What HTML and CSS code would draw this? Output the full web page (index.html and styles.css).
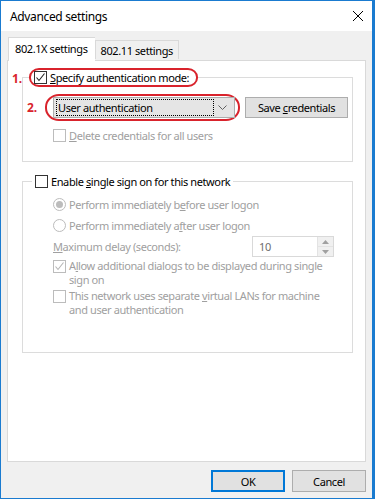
FILE: index.html
```html
<!DOCTYPE html>
<html lang="en">
<head>
    <meta charset="UTF-8">
    <meta name="viewport" content="width=device-width, initial-scale=1.0">
    <title>Advanced settings</title>
    <link rel="stylesheet" href="styles.css">
</head>
<body>

<div class="window">
    <header class="titlebar">
        <span class="title">Advanced settings</span>
        <svg class="close" width="12" height="12" viewBox="0 0 12 12">
            <path d="M1 1 L11 11 M11 1 L1 11" stroke="#000" stroke-width="1" fill="none"/>
        </svg>
    </header>

    <div class="client">
        <div class="tabs">
            <div class="tab active">802.1X settings</div>
            <div class="tab">802.11 settings</div>
        </div>

        <section class="panel">
            <!-- authentication mode -->
            <fieldset class="group group-auth">
                <legend class="mark mark-legend">
                    <span class="num num-1">1.</span>
                    <span class="check checked"></span>
                    <span><u>S</u>pecify authentication mode:</span>
                </legend>
                <div class="row row-mode">
                    <span class="num num-2">2.</span>
                    <div class="mark mark-combo">
                        <div class="combo">
                            <span class="combo-focus">User authentication</span>
                            <svg class="chevron" width="9" height="5" viewBox="0 0 9 5">
                                <path d="M0.5 0.5 L4.5 4.5 L8.5 0.5" stroke="#606060" fill="none"/>
                            </svg>
                        </div>
                    </div>
                    <button class="btn btn-save">Save <u>c</u>redentials</button>
                </div>
                <div class="row row-check disabled">
                    <span class="check"></span>
                    <span><u>D</u>elete credentials for all users</span>
                </div>
            </fieldset>

            <!-- single sign on -->
            <fieldset class="group group-sso">
                <legend class="plain-legend">
                    <span class="check"></span>
                    <span>Enable <u>s</u>ingle sign on for this network</span>
                </legend>
                <div class="sso-body disabled">
                    <div class="row row-line">
                        <span class="radio selected"></span>
                        <span>Perform immediately b<u>e</u>fore user logon</span>
                    </div>
                    <div class="row row-line">
                        <span class="radio"></span>
                        <span>Perform immediately a<u>f</u>ter user logon</span>
                    </div>
                    <div class="row row-line row-delay">
                        <span><u>M</u>aximum delay (seconds):</span>
                        <div class="spin">
                            <span class="spin-value">10</span>
                            <div class="spin-buttons">
                                <span class="spin-btn"><svg width="7" height="4" viewBox="0 0 7 4"><path d="M0 4 L3.5 0 L7 4 Z" fill="#a0a0a0"/></svg></span>
                                <span class="spin-btn"><svg width="7" height="4" viewBox="0 0 7 4"><path d="M0 0 L3.5 4 L7 0 Z" fill="#a0a0a0"/></svg></span>
                            </div>
                        </div>
                    </div>
                    <div class="row row-multi">
                        <span class="check checked"></span>
                        <span class="multi-text">A<u>l</u>low additional dialogs to be displayed during single<br>sign on</span>
                    </div>
                    <div class="row row-multi">
                        <span class="check"></span>
                        <span class="multi-text">This network uses separate <u>v</u>irtual LANs for machine<br>and user authentication</span>
                    </div>
                </div>
            </fieldset>
        </section>

        <div class="actions">
            <button class="btn btn-dialog btn-default">OK</button>
            <button class="btn btn-dialog">Cancel</button>
        </div>
    </div>
</div>

</body>
</html>
```

FILE: styles.css
```css
html, body {
    margin: 0;
    padding: 0;
}

body {
    font-family: "Segoe UI", "Noto Sans", sans-serif;
    font-size: 11px;
    letter-spacing: -0.4px;
    color: #000;
    background: #fff;
}

.window {
    width: 375px;
    height: 499px;
    box-sizing: border-box;
    border: 1px solid #1a7bd0;
    border-right-width: 3px;
    display: flex;
    flex-direction: column;
    background: #f0f0f0;
}

.titlebar {
    height: 30px;
    background: #fff;
    display: flex;
    align-items: center;
    justify-content: space-between;
    padding: 0 8px 0 9px;
    flex-shrink: 0;
}

.title {
    font-size: 12px;
    letter-spacing: -0.35px;
}

.client {
    flex: 1;
    display: flex;
    flex-direction: column;
    padding: 6px 6px 0 6px;
}

/* tabs */
.tabs {
    display: flex;
    align-items: flex-end;
    padding-left: 1px;
    height: 23px;
    position: relative;
    z-index: 1;
}

.tab {
    box-sizing: border-box;
    height: 19px;
    padding: 0 5px;
    border: 1px solid #d9d9d9;
    border-bottom: none;
    background: #f0f0f0;
    display: flex;
    align-items: center;
    margin-bottom: 1px;
}

.tab.active {
    height: 24px;
    margin-bottom: -1px;
    padding: 0 7px 2px 6px;
    background: #fff;
    border-right: none;
}

.panel {
    height: 402px;
    box-sizing: border-box;
    background: #fff;
    border: 1px solid #d9d9d9;
    padding: 0 12px 0 14px;
}

/* group boxes */
.group {
    margin: 0;
    border: 1px solid #dcdcdc;
    padding: 0;
    min-width: 0;
}

.group-auth {
    margin-top: 7px;
    padding: 7px 0 17px 0;
}

.group-sso {
    margin-top: 11px;
    padding: 4px 0 35px 0;
}

.sso-body {
    padding: 0 18px 0 30px;
}

.mark {
    border: 2px solid #d9232c;
    box-sizing: border-box;
}

.mark-legend {
    position: relative;
    margin-left: 6px;
    padding: 0 7px 0 3px;
    height: 19px;
    border-radius: 10px / 9px;
    display: flex;
    align-items: center;
    gap: 3px;
}

.plain-legend {
    margin-left: 9px;
    padding: 0 3px;
    height: 17px;
    display: flex;
    align-items: center;
    gap: 3px;
}

.num {
    color: #d9232c;
    font-weight: bold;
    font-size: 12px;
    letter-spacing: 0;
}

.num-1 {
    position: absolute;
    left: -19px;
    top: 0;
}

.num-2 {
    width: 18px;
}

.row {
    display: flex;
    align-items: center;
    gap: 3px;
}

.row-mode {
    padding-left: 4px;
    gap: 0;
}

.mark-combo {
    padding: 1px 3px 1px 6px;
    border-radius: 14px / 13px;
}

.combo {
    width: 182px;
    height: 21px;
    box-sizing: border-box;
    border: 1px solid #adadad;
    background: #e5e5e5;
    display: flex;
    align-items: center;
    justify-content: space-between;
    padding: 0 7px 0 2px;
}

.combo-focus {
    width: 158px;
    height: 17px;
    box-sizing: border-box;
    border: 1px dotted #000;
    display: flex;
    align-items: center;
    padding-left: 1px;
}

.btn {
    font-family: inherit;
    font-size: 11px;
    letter-spacing: inherit;
    color: #000;
    background: #e1e1e1;
    border: 1px solid #adadad;
    padding: 0;
    box-sizing: border-box;
}

.btn-save {
    margin-left: 5px;
    width: 103px;
    height: 21px;
}

.row-check {
    padding-left: 30px;
    margin-top: 6px;
    height: 17px;
}

.disabled {
    color: #a0a0a0;
}

/* checkboxes and radios */
.check {
    width: 13px;
    height: 13px;
    box-sizing: border-box;
    border: 1px solid #333;
    background: #fff;
    flex-shrink: 0;
}

.check.checked {
    background: #fff url("data:image/svg+xml;utf8,<svg xmlns='http://www.w3.org/2000/svg' width='11' height='11' viewBox='0 0 11 11'><path d='M1.5 5.5 L4 8.5 L9.5 1.5' stroke='%23222' stroke-width='1.1' fill='none'/></svg>") no-repeat center;
}

.disabled .check {
    border-color: #bcbcbc;
}

.disabled .check.checked {
    background: #fff url("data:image/svg+xml;utf8,<svg xmlns='http://www.w3.org/2000/svg' width='11' height='11' viewBox='0 0 11 11'><path d='M1.5 5.5 L4 8.5 L9.5 1.5' stroke='%23b5b5b5' stroke-width='1.1' fill='none'/></svg>") no-repeat center;
}

.radio {
    width: 13px;
    height: 13px;
    box-sizing: border-box;
    border: 1px solid #bcbcbc;
    border-radius: 50%;
    background: #fff;
    flex-shrink: 0;
    display: flex;
    align-items: center;
    justify-content: center;
}

.radio.selected::after {
    content: "";
    width: 7px;
    height: 7px;
    border-radius: 50%;
    background: #bcbcbc;
}

.row-line {
    height: 21px;
}

.row-delay {
    justify-content: space-between;
}

.spin {
    width: 82px;
    height: 21px;
    box-sizing: border-box;
    border: 1px solid #d9d9d9;
    display: flex;
    justify-content: space-between;
    color: #6d6d6d;
}

.spin-value {
    padding-left: 6px;
    display: flex;
    align-items: center;
}

.spin-buttons {
    width: 16px;
    display: flex;
    flex-direction: column;
}

.spin-btn {
    flex: 1;
    background: #f0f0f0;
    border-left: 1px solid #e3e3e3;
    display: flex;
    align-items: center;
    justify-content: center;
}

.spin-btn + .spin-btn {
    border-top: 1px solid #e3e3e3;
}

.row-multi {
    align-items: flex-start;
    line-height: 14px;
    margin-top: 2px;
}

.multi-text {
    white-space: nowrap;
}

.row-multi .check {
    margin-top: 1px;
}

/* dialog buttons */
.actions {
    display: flex;
    justify-content: flex-end;
    gap: 7px;
    padding: 8px 0 0 0;
}

.btn-dialog {
    width: 74px;
    height: 22px;
}

.btn-default {
    border: 2px solid #0078d7;
}
```
